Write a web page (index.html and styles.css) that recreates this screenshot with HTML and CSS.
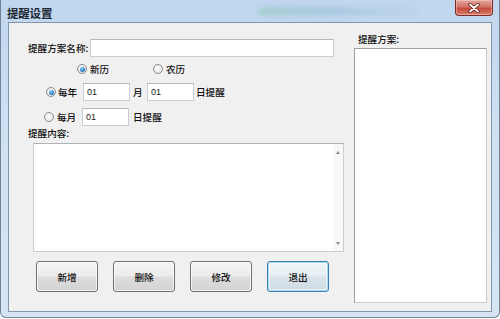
FILE: index.html
```html
<!DOCTYPE html>
<html lang="zh-CN">
  <head>
    <meta charset="UTF-8" />
    <title>提醒设置</title>
    <link rel="stylesheet" href="styles.css">
  </head>
  <body>
    <div class="window">
      <div class="titlebar">
        <span class="title">提醒设置</span>
        <span class="glass-blur"></span>
        <span class="fill"></span>
        <span class="close-btn" title="关闭">
          <svg width="14" height="10" viewBox="0 0 14 10">
            <path d="M3 1.5 L11 8.5 M11 1.5 L3 8.5" stroke="#5a1a14" stroke-width="3.4" stroke-linecap="round" />
            <path d="M3 1.5 L11 8.5 M11 1.5 L3 8.5" stroke="#ffffff" stroke-width="1.8" stroke-linecap="round" />
          </svg>
        </span>
      </div>

      <div class="client">
        <div class="main">
          <div class="row row-name">
            <label class="name-label" for="plan-name">提醒方案名称:</label>
            <input class="field name-input" id="plan-name" type="text" />
          </div>

          <div class="row row-calendar">
            <span class="option calendar-opt">
              <span class="radio checked"></span>
              <span>新历</span>
            </span>
            <span class="option">
              <span class="radio"></span>
              <span>农历</span>
            </span>
          </div>

          <div class="row row-year">
            <span class="radio checked"></span>
            <span class="opt-text">每年</span>
            <input class="field small-input" type="text" value="01" />
            <span class="unit">月</span>
            <input class="field small-input" type="text" value="01" />
            <span class="unit-end">日提醒</span>
          </div>

          <div class="row row-month">
            <span class="radio"></span>
            <span class="opt-text">每月</span>
            <input class="field small-input" type="text" value="01" />
            <span class="unit-month">日提醒</span>
          </div>

          <div class="row row-content-label">提醒内容:</div>

          <div class="memo">
            <div class="memo-text"></div>
            <div class="memo-scroll">
              <span class="arrow up"></span>
              <span class="arrow down"></span>
            </div>
          </div>

          <div class="buttons">
            <button class="win-btn">新增</button>
            <button class="win-btn">删除</button>
            <button class="win-btn">修改</button>
            <button class="win-btn focused">退出</button>
          </div>
        </div>

        <div class="side">
          <div class="side-label">提醒方案:</div>
          <div class="listbox"></div>
        </div>
      </div>
    </div>
  </body>
</html>
```

FILE: styles.css
```css
* {
  box-sizing: border-box;
}

body {
  margin: 0;
  padding: 0;
  background: #ffffff;
  font-family: "Noto Sans CJK SC", "Noto Sans", sans-serif;
  font-size: 9.6px;
  font-weight: 500;
  color: #111111;
}

/* window frame (win7 aero style) */
.window {
  width: 500px;
  height: 318px;
  display: flex;
  flex-direction: column;
  padding: 0 7px 5px 7px;
  border: 1px solid #6f849b;
  border-top: none;
  border-radius: 0 0 6px 6px;
  background: linear-gradient(to bottom, #bfd6ee 0%, #cfe0f2 40%, #d6e5f4 100%);
}

.titlebar {
  height: 22px;
  display: flex;
  align-items: flex-start;
  position: relative;
}

.title {
  margin: 5px 0 0 -1px;
  font-size: 11.5px;
  font-weight: bold;
  color: #1e2a36;
  letter-spacing: -0.2px;
}

.glass-blur {
  position: absolute;
  left: 250px;
  top: 7px;
  width: 160px;
  height: 9px;
  border-radius: 4px;
  background: linear-gradient(to right, rgba(140, 200, 180, 0.45), rgba(140, 185, 210, 0.4), rgba(180, 200, 210, 0.2));
  filter: blur(2px);
}

.fill {
  flex: 1;
}

.close-btn {
  width: 38px;
  height: 16px;
  margin-right: -1px;
  display: flex;
  align-items: center;
  justify-content: center;
  border: 1px solid #7b2c25;
  border-top: none;
  border-radius: 0 0 4px 4px;
  background: linear-gradient(to bottom, #e3a89f 0%, #d27466 45%, #c44a3b 55%, #d8806c 100%);
  box-shadow: inset 0 0 0 1px rgba(255, 220, 210, 0.45);
}

.client {
  flex: 1;
  display: flex;
  border: 1px solid #8497ab;
  background: #f0f0f0;
}

/* left part */
.main {
  width: 345px;
  padding: 16px 0 0 19px;
  display: flex;
  flex-direction: column;
}

.row {
  display: flex;
  align-items: center;
  white-space: nowrap;
}

.row-name {
  height: 18px;
}

.name-label {
  width: 62px;
}

.field {
  height: 18px;
  border: 1px solid #c9cdd2;
  border-top-color: #b3b8bd;
  background: #ffffff;
  font-family: "Liberation Sans", sans-serif;
  font-size: 9px;
  color: #222222;
  padding: 0 3px;
  outline: none;
}

.name-input {
  width: 244px;
}

.row-calendar {
  height: 14px;
  margin-top: 5px;
  padding-left: 49px;
}

.option {
  display: flex;
  align-items: center;
  gap: 3px;
}

.calendar-opt {
  width: 76px;
}

.radio {
  width: 10px;
  height: 10px;
  border-radius: 50%;
  border: 1px solid #8c8c8c;
  background: radial-gradient(circle at 50% 40%, #ffffff 0%, #dcdcdc 100%);
  flex-shrink: 0;
  position: relative;
}

.radio.checked::after {
  content: "";
  position: absolute;
  left: 1.5px;
  top: 1.5px;
  width: 5px;
  height: 5px;
  border-radius: 50%;
  background: radial-gradient(circle at 40% 35%, #8fd0f5 0%, #2b7fc0 60%, #1b5a93 100%);
}

.row-year {
  height: 18px;
  margin-top: 7px;
  padding-left: 18px;
}

.row-year .radio {
  margin-right: 2px;
}

.opt-text {
  width: 25px;
}

.small-input {
  width: 47px;
}

.unit {
  width: 17px;
  padding-left: 3px;
}

.unit-end {
  padding-left: 2px;
}

.row-month {
  height: 18px;
  margin-top: 7px;
  padding-left: 16px;
}

.row-month .radio {
  margin-right: 3px;
}

.unit-month {
  padding-left: 4px;
}

.row-content-label {
  height: 12px;
  margin-top: 1px;
}

.memo {
  width: 311px;
  height: 109px;
  margin: 4px 0 0 5px;
  display: flex;
  border: 1px solid #c9cdd2;
  border-top-color: #adb2b6;
  background: #ffffff;
}

.memo-text {
  flex: 1;
}

.memo-scroll {
  width: 10px;
  display: flex;
  flex-direction: column;
  justify-content: space-between;
  align-items: center;
  padding: 7px 0 6px 0;
  background: #f8f8f8;
}

.arrow {
  width: 0;
  height: 0;
  border-left: 2.5px solid transparent;
  border-right: 2.5px solid transparent;
}

.arrow.up {
  border-bottom: 3px solid #8a8a8a;
}

.arrow.down {
  border-top: 3px solid #8a8a8a;
}

.buttons {
  display: flex;
  gap: 15px;
  margin: 9px 0 0 8px;
}

.win-btn {
  width: 62px;
  height: 31px;
  margin: 0;
  padding: 0;
  border: 1px solid #707070;
  border-radius: 3px;
  font-family: "Noto Sans CJK SC", "Noto Sans", sans-serif;
  font-size: 9.6px;
  font-weight: 500;
  color: #111111;
  background: linear-gradient(to bottom, #f4f4f4 0%, #ececec 48%, #dedede 52%, #d2d2d2 100%);
  box-shadow: inset 0 0 0 1px rgba(255, 255, 255, 0.7);
  cursor: pointer;
}

.win-btn.focused {
  border-color: #3c7fb1;
  box-shadow: inset 0 0 0 1px #a8daf2, inset 0 0 0 2px rgba(255, 255, 255, 0.5);
  background: linear-gradient(to bottom, #f0f6fa 0%, #e6eef3 48%, #d8e3ea 52%, #cfdbe3 100%);
}

/* right part */
.side {
  width: 133px;
  padding-top: 10px;
  display: flex;
  flex-direction: column;
}

.side-label {
  height: 12px;
  line-height: 12px;
  padding-left: 4px;
}

.listbox {
  width: 133px;
  height: 255px;
  margin-top: 3px;
  border: 1px solid #a0a0a0;
  border-right-color: #c9c9c9;
  border-bottom-color: #c9c9c9;
  background: #ffffff;
}
```
